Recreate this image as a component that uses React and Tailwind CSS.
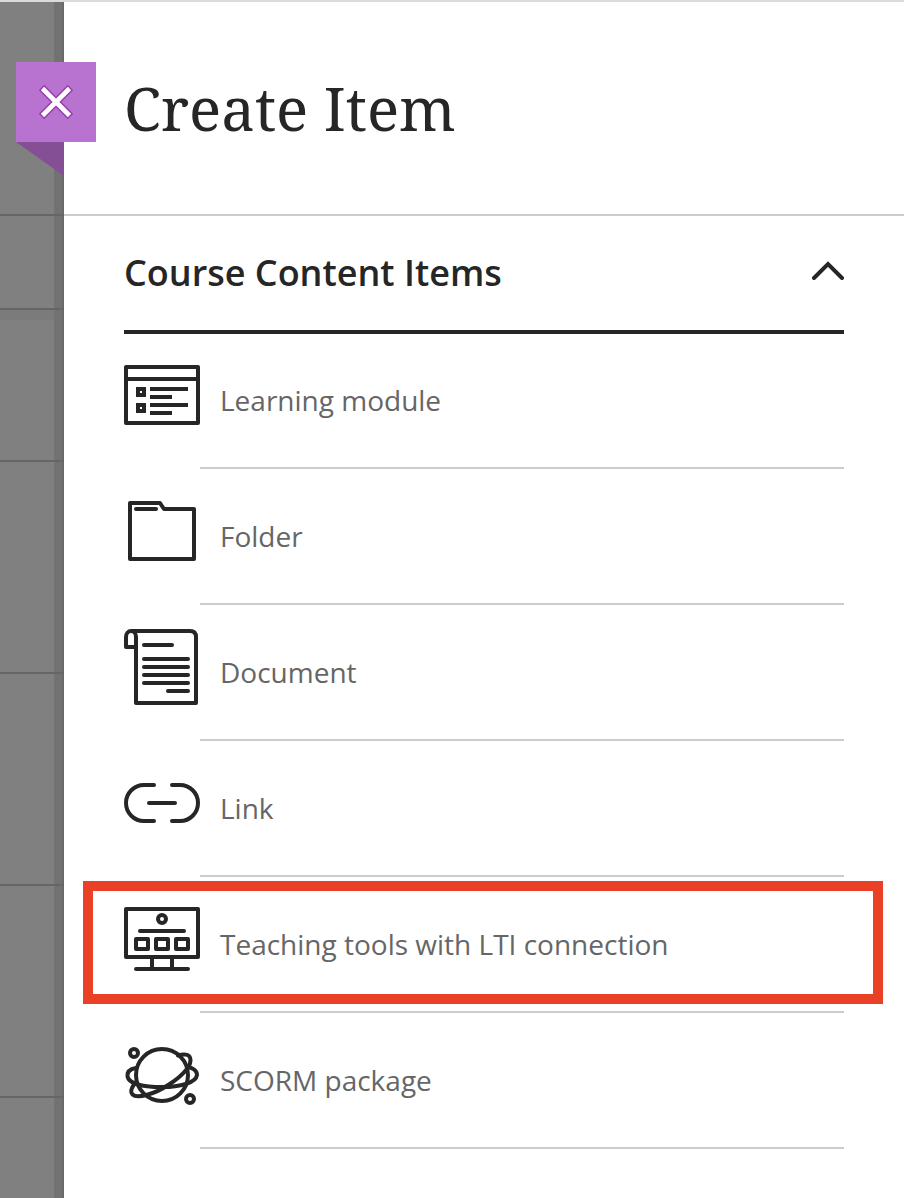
import React from 'react';

// heights of the course rows visible behind the panel
const backdropRows = ['h-[214px]', 'h-[94px]', 'h-[152px]', 'h-[212px]', 'h-[212px]', 'h-[212px]'];

function Icon({ children }) {
  return (
    <svg
      viewBox="0 0 76 76"
      className="w-[76px] h-[76px] shrink-0 mb-3"
      fill="none"
      stroke="#262626"
      strokeWidth="4"
      strokeLinecap="round"
      strokeLinejoin="round"
      aria-hidden="true"
    >
      {children}
    </svg>
  );
}

function ModuleIcon() {
  return (
    <Icon>
      <rect x="2" y="10" width="72" height="56" />
      <path d="M2 22h72" />
      <g strokeLinecap="butt" strokeLinejoin="miter">
        <path d="M14 32h6v6h-6zM14 48h6v6h-6z" />
        <path d="M26 32h38M26 40h22M26 48h38M26 56h22" />
      </g>
    </Icon>
  );
}

function FolderIcon() {
  return (
    <Icon>
      <path d="M6 10h30l4 6h30v50H6z" />
      <path d="M12 16h20" />
    </Icon>
  );
}

function DocumentIcon() {
  return (
    <Icon>
      <path d="M12 18H2V8a5 6 0 0 1 10 0v66h60V8c0-4-2-6-6-6H7" />
      <path d="M20 16h28M20 30h44M20 38h44M20 46h44M20 54h44M44 62h20" />
    </Icon>
  );
}

function LinkIcon() {
  return (
    <Icon>
      <path d="M30 20H20a18 18 0 0 0 0 36h10M48 20h8a18 18 0 0 1 0 36h-8M25 38h26" />
    </Icon>
  );
}

function ToolsIcon() {
  return (
    <Icon>
      <rect x="2" y="8" width="72" height="48" />
      <circle cx="38" cy="18" r="4" />
      <path d="M16 30h44M28 56v12M48 56v12M12 68h52" />
      <path d="M12 38h12v10H12zM32 38h12v10H32zM52 38h12v10H52z" />
    </Icon>
  );
}

function PlanetIcon() {
  return (
    <Icon>
      <circle cx="38" cy="38" r="26" />
      <circle cx="10" cy="16" r="4" />
      <circle cx="66" cy="62" r="4" />
      <path d="M12 31C6 32 3 35 3.500 39.500C5 47 20 50 38 50s34-4 35-12c0-4-4-7-9-8" />
      <path d="M54 18.500c6-2 11-1 12 2 3 7-7 18-21 27C31 57 13 62 8.500 57.500 6 55 8 50 11 46" />
    </Icon>
  );
}

const items = [
  { label: 'Learning module', icon: ModuleIcon },
  { label: 'Folder', icon: FolderIcon },
  { label: 'Document', icon: DocumentIcon },
  { label: 'Link', icon: LinkIcon },
  { label: 'Teaching tools with LTI connection', icon: ToolsIcon, highlighted: true },
  { label: 'SCORM package', icon: PlanetIcon },
];

function Shade() {
  return (
    <>
      <div className="w-2 bg-[#727272]" />
      <div className="w-0.5 bg-[#696969]" />
    </>
  );
}

function Backdrop() {
  return (
    <div className="w-16 shrink-0 flex flex-col bg-[#808080]" aria-hidden="true">
      {backdropRows.map((height, i) => (
        <div key={i} className={`${height} shrink-0 flex justify-end border-b-2 border-[#666666]`}>
          {i === 2 && <div className="flex-1 h-2.5 bg-[#7b7b7b]" />}
          <Shade />
        </div>
      ))}
      <div className="flex-1 flex justify-end">
        <Shade />
      </div>
    </div>
  );
}

function CloseButton() {
  return (
    <div className="absolute -left-12 top-[60px]">
      <button
        type="button"
        aria-label="Close"
        className="flex items-center justify-center w-20 h-20 bg-[#b872cf]"
      >
        <svg viewBox="0 0 36 36" className="w-9 h-9" fill="none" aria-hidden="true">
          <path d="M3.500 3.500l29 29M32.500 3.500l-29 29" stroke="#9a3bb0" strokeWidth="7.600" />
          <path d="M4.500 4.500l27 27M31.500 4.500l-27 27" stroke="#ffffff" strokeWidth="4.600" />
        </svg>
      </button>
      <svg viewBox="0 0 48 34" className="block w-12 h-[34px]" aria-hidden="true">
        <path d="M0 0h48v34z" fill="#844f94" />
      </svg>
    </div>
  );
}

function ItemRow({ item }) {
  const ItemIcon = item.icon;
  return (
    <li className="relative">
      <button type="button" className="w-full h-[136px] flex items-center text-left">
        <ItemIcon />
        <span className="flex-1 self-stretch flex items-center pl-5 border-b-2 border-[#cccccc] text-[28px] leading-10 text-[#666666]">
          {item.label}
        </span>
      </button>
      {item.highlighted && (
        <div className="absolute -left-[41px] -right-[39px] top-1 bottom-[9px] border-[10px] border-[#ea4025] pointer-events-none" />
      )}
    </li>
  );
}

function App() {
  return (
    <div className="min-h-screen flex border-t-2 border-[#dcdcdc] bg-white font-['Open_Sans',sans-serif] text-[#262626]">
      <Backdrop />
      <main className="relative flex-1 min-w-0">
        <CloseButton />
        <header className="h-[214px] flex items-center pl-[60px] border-b-2 border-[#cccccc]">
          <h1 className="font-['Noto_Serif','DejaVu_Serif',serif] text-[60px] leading-[80px]">Create Item</h1>
        </header>
        <section className="px-[60px]">
          <h2 className="text-4xl font-semibold">
            <button
              type="button"
              aria-expanded="true"
              className="w-full h-[118px] flex items-center justify-between border-b-4 border-[#262626]"
            >
              Course Content Items
              <svg viewBox="0 0 32 20" className="w-8 h-5 mb-1.5" fill="none" stroke="#262626" strokeWidth="4" strokeLinecap="round" aria-hidden="true">
                <path d="M2 18L16 4l14 14" />
              </svg>
            </button>
          </h2>
          <ul className="-mt-px">
            {items.map((item) => (
              <ItemRow key={item.label} item={item} />
            ))}
          </ul>
        </section>
      </main>
    </div>
  );
}

export default App;
